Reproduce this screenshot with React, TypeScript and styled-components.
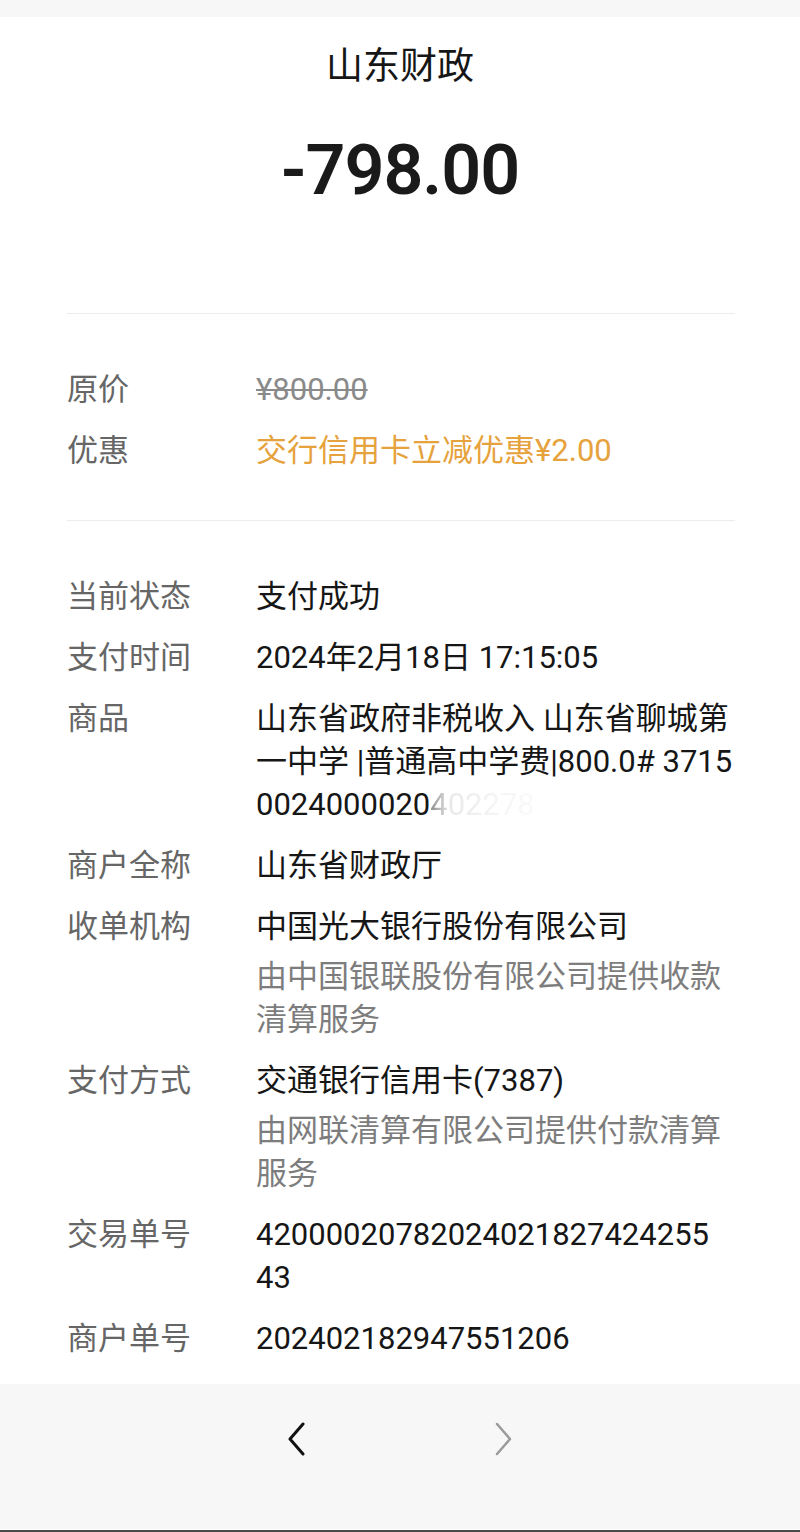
import React from 'react';
import styled, { createGlobalStyle } from 'styled-components';

const GlobalStyle = createGlobalStyle`
  html, body {
    margin: 0;
    padding: 0;
    background: #ffffff;
  }
  body {
    font-family: Roboto, "Noto Sans CJK SC", "Noto Sans", sans-serif;
    color: #161616;
  }
`;

const Page = styled.div`
  width: 800px;
  min-height: 1532px;
  display: flex;
  flex-direction: column;
  background: #fff;
`;

const StatusStrip = styled.div`
  height: 17px;
  background: #f7f7f7;
`;

const Header = styled.header`
  display: flex;
  flex-direction: column;
  align-items: center;
  padding-top: 21px;
`;

const Merchant = styled.h1`
  margin: 0;
  font-family: "Noto Sans CJK SC", sans-serif;
  font-size: 37px;
  line-height: 50px;
  font-weight: 400;
  color: #161616;
`;

const Amount = styled.div`
  margin-top: 42px;
  font-family: Roboto, "Liberation Sans", sans-serif;
  font-size: 70px;
  line-height: 80px;
  font-weight: 600;
  color: #1a1a1a;
  letter-spacing: -1px;
`;

const Content = styled.main`
  flex: 1;
  padding: 103px 65px 0 67px;
`;

const Divider = styled.hr`
  margin: 0;
  border: none;
  border-top: 1px solid #ececec;
`;

const Section = styled.section<{ $top: number; $bottom: number }>`
  display: flex;
  flex-direction: column;
  gap: 18px;
  padding: ${(p) => p.$top}px 0 ${(p) => p.$bottom}px;
`;

const Row = styled.div`
  display: grid;
  grid-template-columns: 189px 1fr;
  font-size: 31px;
  line-height: 43px;
`;

const Label = styled.div`
  color: #666;
`;

const Value = styled.div<{ $tone?: 'plain' | 'strike' | 'promo' }>`
  color: ${(p) =>
    p.$tone === 'promo' ? '#e6a23c' : p.$tone === 'strike' ? '#8a8a8a' : '#161616'};
  text-decoration: ${(p) => (p.$tone === 'strike' ? 'line-through' : 'none')};
  text-decoration-thickness: 2px;
`;

const Line = styled.span`
  display: block;
  white-space: nowrap;
`;

const Note = styled.div`
  margin-top: 7px;
  color: #7d7d7d;
`;

const Faded = styled.span`
  background: linear-gradient(90deg, #8a8a8a 0%, #e8e8e8 18%, #f4f4f4 60%, #fafafa 100%);
  -webkit-background-clip: text;
  background-clip: text;
  color: transparent;
`;

const Footer = styled.footer`
  height: 145px;
  background: #f7f7f7;
  border-bottom: 1px solid #fff;
`;

const NavBar = styled.nav`
  height: 110px;
  display: flex;
  justify-content: center;
  align-items: center;
  gap: 186px;
`;

const NavButton = styled.button<{ $disabled?: boolean }>`
  border: none;
  background: none;
  padding: 0;
  width: 22px;
  height: 36px;
  display: flex;
  align-items: center;
  justify-content: center;
  color: ${(p) => (p.$disabled ? '#9b9b9b' : '#111')};
`;

const BottomEdge = styled.div`
  height: 2px;
  background: #4a4a4a;
`;

function Chevron({ dir, weight }: { dir: 'left' | 'right'; weight: number }) {
  const d = dir === 'left' ? 'M17 2 L4 17 L17 32' : 'M3 2 L16 17 L3 32';
  return (
    <svg width="20" height="34" viewBox="0 0 20 34" fill="none">
      <path d={d} stroke="currentColor" strokeWidth={weight} strokeLinecap="round" strokeLinejoin="round" />
    </svg>
  );
}

interface Detail {
  label: string;
  lines: React.ReactNode[];
  notes?: string[];
}

const details: Detail[] = [
  { label: '当前状态', lines: ['支付成功'] },
  { label: '支付时间', lines: ['2024年2月18日 17:15:05'] },
  {
    label: '商品',
    lines: [
      '山东省政府非税收入 山东省聊城第',
      '一中学 |普通高中学费|800.0# 3715',
      <>
        0024000020<Faded>402278</Faded>
      </>,
    ],
  },
  { label: '商户全称', lines: ['山东省财政厅'] },
  {
    label: '收单机构',
    lines: ['中国光大银行股份有限公司'],
    notes: ['由中国银联股份有限公司提供收款', '清算服务'],
  },
  {
    label: '支付方式',
    lines: ['交通银行信用卡(7387)'],
    notes: ['由网联清算有限公司提供付款清算', '服务'],
  },
  { label: '交易单号', lines: ['42000020782024021827424255', '43'] },
  { label: '商户单号', lines: ['202402182947551206'] },
];

export default function App() {
  return (
    <Page>
      <GlobalStyle />
      <StatusStrip />
      <Header>
        <Merchant>山东财政</Merchant>
        <Amount>-798.00</Amount>
      </Header>
      <Content>
        <Divider />
        <Section $top={54} $bottom={48}>
          <Row>
            <Label>原价</Label>
            <Value $tone="strike">¥800.00</Value>
          </Row>
          <Row>
            <Label>优惠</Label>
            <Value $tone="promo">交行信用卡立减优惠¥2.00</Value>
          </Row>
        </Section>
        <Divider />
        <Section $top={54} $bottom={0}>
          {details.map((item) => (
            <Row key={item.label}>
              <Label>{item.label}</Label>
              <Value>
                {item.lines.map((line, i) => (
                  <Line key={i}>{line}</Line>
                ))}
                {item.notes && (
                  <Note>
                    {item.notes.map((n) => (
                      <Line key={n}>{n}</Line>
                    ))}
                  </Note>
                )}
              </Value>
            </Row>
          ))}
        </Section>
      </Content>
      <Footer>
        <NavBar>
          <NavButton aria-label="上一页">
            <Chevron dir="left" weight={3} />
          </NavButton>
          <NavButton $disabled aria-label="下一页">
            <Chevron dir="right" weight={2.5} />
          </NavButton>
        </NavBar>
      </Footer>
      <BottomEdge />
    </Page>
  );
}
